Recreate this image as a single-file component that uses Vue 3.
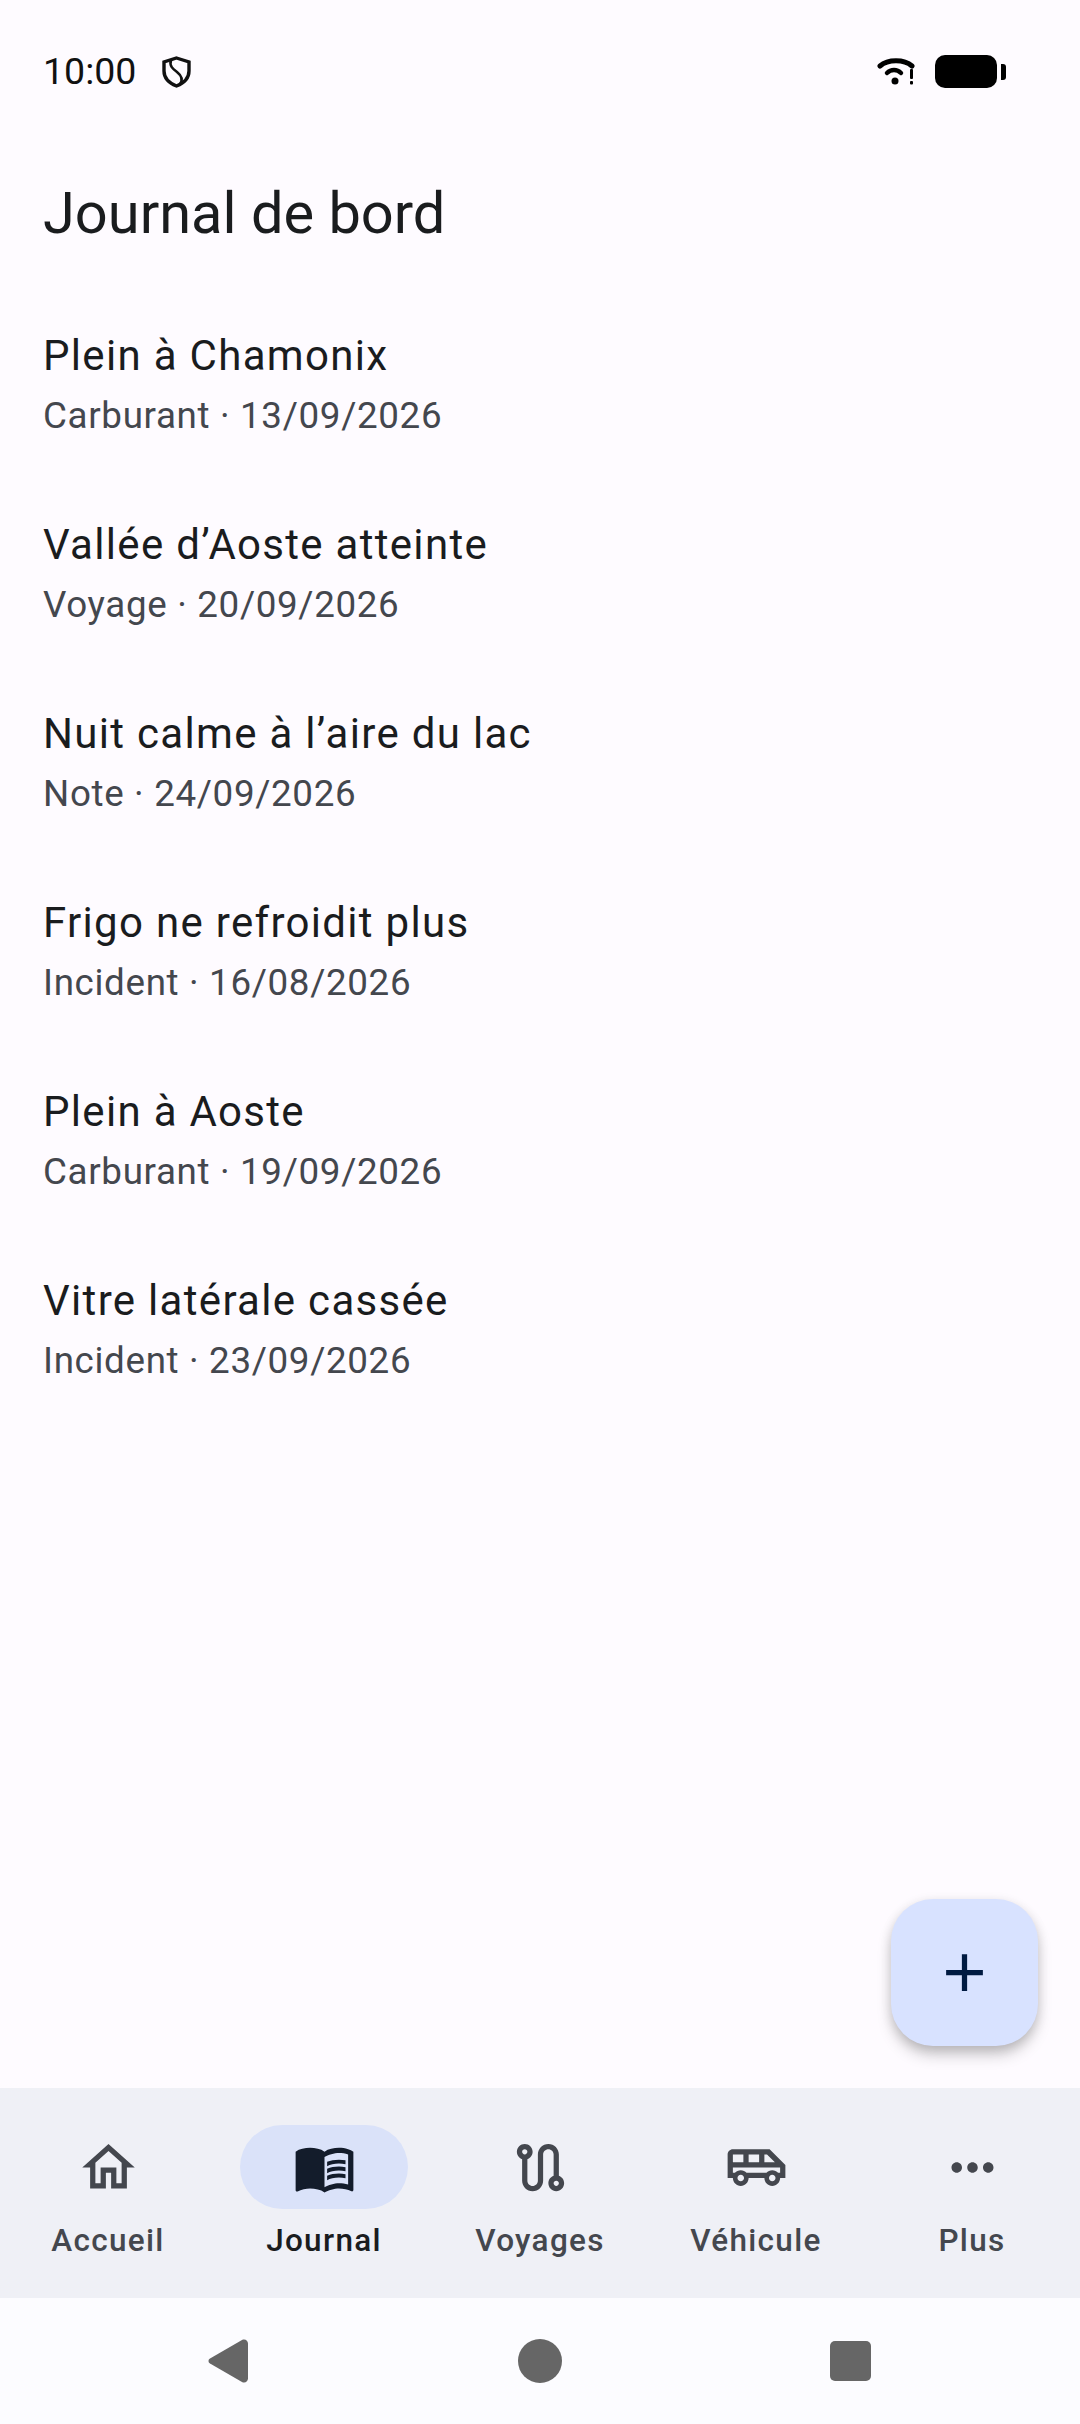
<script setup>
const entries = [
  { title: 'Plein à Chamonix', meta: 'Carburant · 13/09/2026' },
  { title: 'Vallée d’Aoste atteinte', meta: 'Voyage · 20/09/2026' },
  { title: 'Nuit calme à l’aire du lac', meta: 'Note · 24/09/2026' },
  { title: 'Frigo ne refroidit plus', meta: 'Incident · 16/08/2026' },
  { title: 'Plein à Aoste', meta: 'Carburant · 19/09/2026' },
  { title: 'Vitre latérale cassée', meta: 'Incident · 23/09/2026' },
]

const tabs = [
  {
    label: 'Accueil',
    path: 'M12 5.69l5 4.5V18h-2v-6H9v6H7v-7.81l5-4.5M12 3L2 12h3v8h6v-6h2v6h6v-8h3L12 3z',
  },
  {
    label: 'Journal',
    active: true,
    path: 'M21 5c-1.11-.35-2.33-.5-3.5-.5-1.95 0-4.05.4-5.5 1.5-1.45-1.1-3.55-1.5-5.5-1.5S2.45 4.9 1 6v14.65c0 .25.25.5.5.5.1 0 .15-.05.25-.05C3.1 20.45 5.05 20 6.5 20c1.95 0 4.05.4 5.5 1.5 1.35-.85 3.8-1.5 5.5-1.5 1.65 0 3.35.3 4.75 1.05.1.05.15.05.25.05.25 0 .5-.25.5-.5V6c-.6-.45-1.25-.75-2-1zm0 13.5c-1.1-.35-2.3-.5-3.5-.5-1.7 0-4.15.65-5.5 1.5V8c1.35-.85 3.8-1.5 5.5-1.5 1.2 0 2.4.15 3.5.5v11.5zM17.5 10.5c.88 0 1.73.09 2.5.26V9.24c-.79-.15-1.64-.24-2.5-.24-1.7 0-3.24.29-4.5.83v1.66c1.13-.64 2.7-.99 4.5-.99zM13 12.49v1.66c1.13-.64 2.7-.99 4.5-.99.88 0 1.73.09 2.5.26V11.9c-.79-.15-1.64-.24-2.5-.24-1.7 0-3.24.3-4.5.83zM17.5 14.33c-1.7 0-3.24.29-4.5.83v1.66c1.13-.64 2.7-.99 4.5-.99.88 0 1.73.09 2.5.26v-1.52c-.79-.16-1.64-.24-2.5-.24z',
  },
  {
    label: 'Voyages',
    path: 'M19 15.18V7c0-2.21-1.79-4-4-4s-4 1.79-4 4v10c0 1.1-.9 2-2 2s-2-.9-2-2V8.82C8.16 8.4 9 7.3 9 6c0-1.66-1.34-3-3-3S3 4.34 3 6c0 1.3.84 2.4 2 2.82V17c0 2.21 1.79 4 4 4s4-1.79 4-4V7c0-1.1.9-2 2-2s2 .9 2 2v8.18c-1.16.41-2 1.51-2 2.82 0 1.66 1.34 3 3 3s3-1.34 3-3c0-1.3-.84-2.4-2-2.82zM6 7c-.55 0-1-.45-1-1s.45-1 1-1 1 .45 1 1-.45 1-1 1zm12 12c-.55 0-1-.45-1-1s.45-1 1-1 1 .45 1 1-.45 1-1 1z',
  },
  {
    label: 'Véhicule',
    path: 'M17 5H3c-1.1 0-2 .9-2 2v9h2c0 1.66 1.34 3 3 3s3-1.34 3-3h6c0 1.66 1.34 3 3 3s3-1.34 3-3h2v-5l-6-6zM15 7h1l3 3h-4V7zM9 7h4v3H9V7zM3 7h4v3H3V7zm3 10.25c-.69 0-1.25-.56-1.25-1.25s.56-1.25 1.25-1.25 1.25.56 1.25 1.25-.56 1.25-1.25 1.25zm12 0c-.69 0-1.25-.56-1.25-1.25s.56-1.25 1.25-1.25 1.25.56 1.25 1.25-.56 1.25-1.25 1.25zM21 14h-.78c-.55-.61-1.34-1-2.22-1s-1.67.39-2.22 1H8.22c-.55-.61-1.34-1-2.22-1s-1.67.39-2.22 1H3v-2h18v2z',
  },
  {
    label: 'Plus',
    path: 'M6 10c-1.1 0-2 .9-2 2s.9 2 2 2 2-.9 2-2-.9-2-2-2zm12 0c-1.1 0-2 .9-2 2s.9 2 2 2 2-.9 2-2-.9-2-2-2zm-6 0c-1.1 0-2 .9-2 2s.9 2 2 2 2-.9 2-2-.9-2-2-2z',
  },
]
</script>

<template>
  <div class="screen">
    <div class="status-bar">
      <span class="clock">10:00</span>
      <svg class="shield" viewBox="0 0 29 32" fill="none" stroke="#111" stroke-width="3.4">
        <path d="M14.5 2 27 6V15C27 22 22 27 14.500 30 7 27 2 22 2 15V6Z" />
        <path d="M9 4C7 10 11 13 15 16 20 20 21 24 18 28" stroke-width="2.600" />
      </svg>
      <span class="status-space"></span>
      <svg class="wifi" viewBox="0 0 40 30">
        <path d="M3 10C11 3 27 3 35 10" fill="none" stroke="#000" stroke-width="5" stroke-linecap="round" />
        <path d="M10 17C14 13 20 13 24 17" fill="none" stroke="#000" stroke-width="4.500" stroke-linecap="round" />
        <circle cx="18" cy="25" r="3.500" />
        <rect x="33" y="13" width="3" height="10" rx="1" />
        <rect x="33" y="25" width="3" height="3.500" rx="1" />
      </svg>
      <span class="battery"><span class="battery-tip"></span></span>
    </div>

    <h1 class="page-title">Journal de bord</h1>

    <ul class="entries">
      <li v-for="entry in entries" :key="entry.title" class="entry">
        <span class="entry-title">{{ entry.title }}</span>
        <span class="entry-meta">{{ entry.meta }}</span>
      </li>
    </ul>

    <div class="fab-row">
      <button class="fab" type="button" aria-label="Ajouter">
        <svg viewBox="0 0 24 24"><path d="M19 13h-6v6h-2v-6H5v-2h6V5h2v6h6v2z" /></svg>
      </button>
    </div>

    <nav class="tabs">
      <div v-for="tab in tabs" :key="tab.label" class="tab" :class="{ 'tab--active': tab.active }">
        <span class="tab-pill">
          <svg viewBox="0 0 24 24"><path :d="tab.path" /></svg>
        </span>
        <span class="tab-label">{{ tab.label }}</span>
      </div>
    </nav>

    <div class="system-nav">
      <svg class="sys-back" viewBox="0 0 41 44">
        <path d="M2 19.500 34 1c3-1.500 6 .5 6 3.500v35c0 3-3 5-6 3.500L2 24.500c-2-1.200-2-3.800 0-5z" />
      </svg>
      <span class="sys-home"></span>
      <span class="sys-recent"></span>
    </div>
  </div>
</template>

<style>
html,
body {
  margin: 0;
  background: #fefbff;
}
</style>

<style scoped>
.screen {
  width: 1080px;
  height: 2424px;
  display: flex;
  flex-direction: column;
  background: #fefbff;
  font-family: Roboto, sans-serif;
  color: #1a1c1e;
  overflow: hidden;
}

.status-bar {
  height: 142px;
  padding: 0 41px 0 43px;
  flex-shrink: 0;
  display: flex;
  align-items: center;
}

.clock {
  font-size: 37.5px;
  line-height: 42px;
  color: #111;
}

.shield {
  width: 29px;
  height: 32px;
  margin: 2px 0 0 26px;
}

.status-space {
  flex: 1;
}

.wifi {
  width: 40px;
  height: 30px;
}

.battery {
  position: relative;
  width: 62px;
  height: 33px;
  margin: 0 42px 0 18px;
  border-radius: 10px;
  background: #000;
}

.battery-tip {
  position: absolute;
  right: -9px;
  top: 9px;
  width: 5px;
  height: 16px;
  border-radius: 0 3px 3px 0;
  background: #000;
}

.page-title {
  margin: 29px 0 0;
  padding: 0 43px;
  height: 84px;
  display: flex;
  align-items: center;
  font-size: 57.75px;
  font-weight: 400;
  flex-shrink: 0;
}

.entries {
  list-style: none;
  margin: 70px 0 0;
  padding: 0;
}

.entry {
  height: 189px;
  padding: 0 43px;
  box-sizing: border-box;
  display: flex;
  flex-direction: column;
}

.entry-title {
  font-size: 42px;
  line-height: 62px;
  margin-bottom: 3px;
  letter-spacing: 1.31px;
}

.entry-meta {
  font-size: 36.75px;
  line-height: 52px;
  letter-spacing: 0.66px;
  color: #44474e;
}

.fab-row {
  margin-top: auto;
  padding: 0 42px 42px 0;
  display: flex;
  justify-content: flex-end;
}

.fab {
  width: 147px;
  height: 147px;
  padding: 0;
  border: none;
  border-radius: 42px;
  background: #d8e2ff;
  box-shadow:
    0 10px 16px -2px rgba(0, 0, 0, 0.22),
    0 3px 12px rgba(0, 0, 0, 0.12);
  display: flex;
  align-items: center;
  justify-content: center;
}

.fab svg {
  width: 63px;
  height: 63px;
  fill: #001a41;
}

.tabs {
  height: 210px;
  flex-shrink: 0;
  display: flex;
  background: #eff0f6;
}

.tab {
  flex: 1;
  display: flex;
  flex-direction: column;
  align-items: center;
  padding-top: 37px;
  color: #44474e;
}

.tab-pill {
  width: 168px;
  height: 84px;
  border-radius: 42px;
  display: flex;
  align-items: center;
  justify-content: center;
}

.tab svg {
  width: 63px;
  height: 63px;
  fill: currentColor;
}

.tab-label {
  margin-top: 11px;
  font-size: 31.5px;
  line-height: 42px;
  font-weight: 500;
  letter-spacing: 1.31px;
}

.tab--active {
  color: #1a1c1e;
}

.tab--active .tab-pill {
  background: #dae2f9;
}

.tab--active svg {
  fill: #131c2b;
}

.system-nav {
  height: 126px;
  flex-shrink: 0;
  display: flex;
  align-items: center;
  background: #fcfcff;
}

.sys-back {
  width: 41px;
  height: 44px;
  margin-left: 208px;
  fill: #666;
}

.sys-home {
  width: 44px;
  height: 44px;
  margin-left: 269px;
  border-radius: 50%;
  background: #666;
}

.sys-recent {
  width: 41px;
  height: 40px;
  margin-left: 268px;
  border-radius: 5px;
  background: #666;
}
</style>
